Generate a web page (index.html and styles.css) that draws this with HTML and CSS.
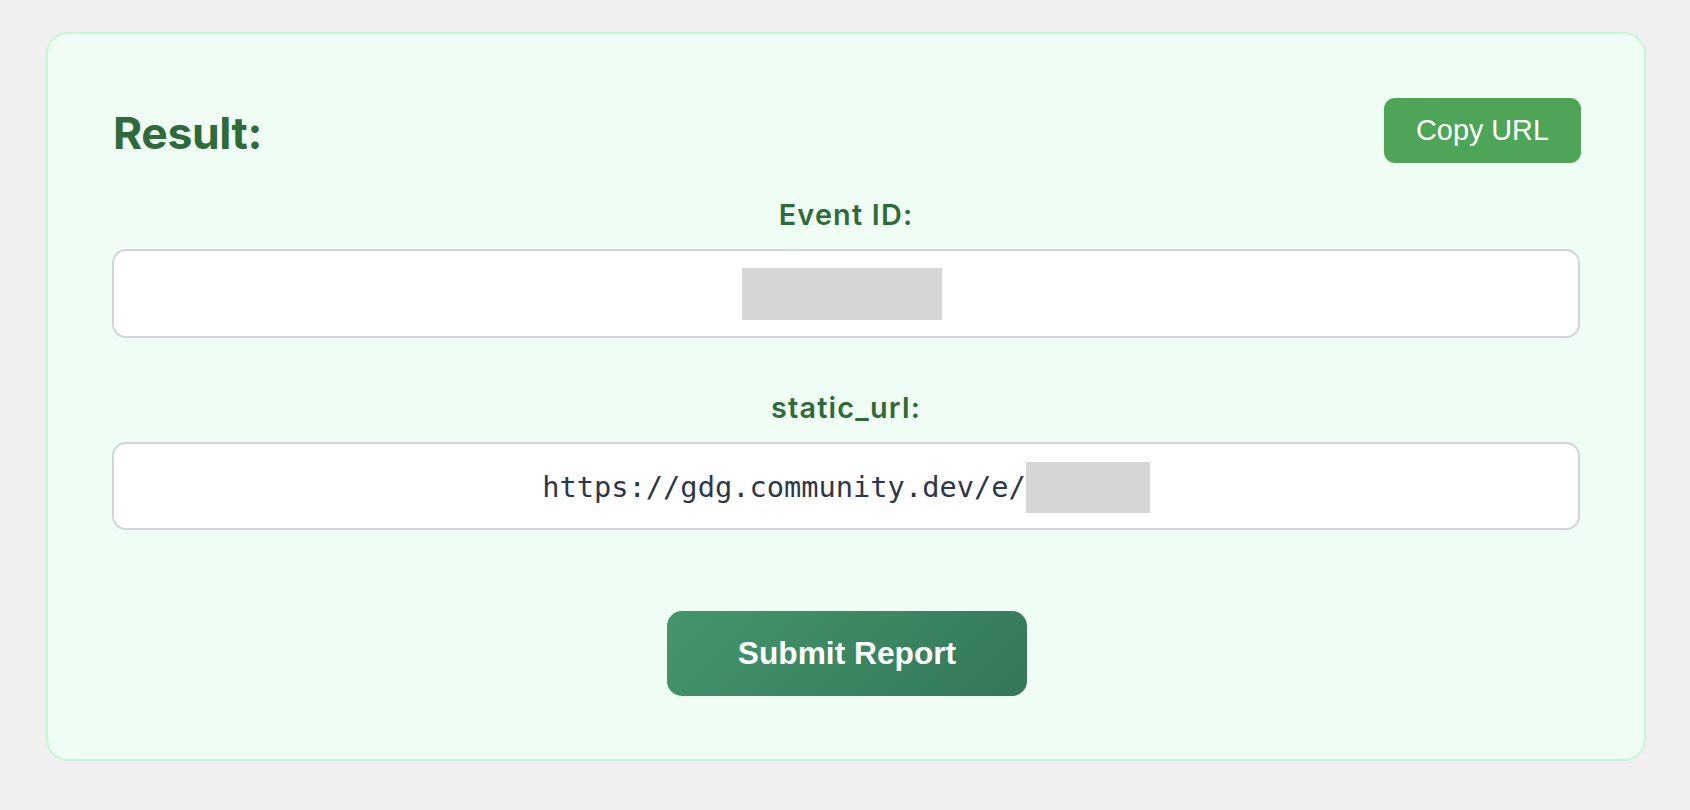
FILE: index.html
```html
<!DOCTYPE html>
<html lang="en">
<head>
<meta charset="utf-8">
<title>Result</title>
<link rel="stylesheet" href="styles.css">
</head>
<body>
  <main class="page">
    <section class="card">
      <div class="card-header">
        <h2 class="title">Result:</h2>
        <button class="copy-btn" type="button">Copy URL</button>
      </div>

      <label class="field-label field-label--first">Event ID:</label>
      <div class="field field--id">
        <span class="redacted redacted--id"></span>
      </div>

      <label class="field-label field-label--second">static_url:</label>
      <div class="field field--url">
        <span class="mono">https://gdg.community.dev/e/</span><span class="redacted redacted--url"></span>
      </div>

      <div class="actions">
        <button class="submit-btn" type="button">Submit Report</button>
      </div>
    </section>
  </main>
</body>
</html>
```

FILE: styles.css
```css
* {
  box-sizing: border-box;
}

html, body {
  margin: 0;
  padding: 0;
}

body {
  background: #f0f0f0;
  font-family: "Inter", "Noto Sans", sans-serif;
}

.page {
  padding: 32px 44px 0 46px;
}

.card {
  width: 1600px;
  background: #f0fdf4;
  border: 2px solid #c6f6d5;
  border-radius: 22px;
  padding: 64px 64px 63px 64px;
  display: flex;
  flex-direction: column;
}

.card-header {
  display: flex;
  justify-content: space-between;
  align-items: center;
  height: 65px;
}

.title {
  margin: 4px 0 0 1px;
  font-family: "Inter", sans-serif;
  font-weight: 700;
  font-size: 44.5px;
  letter-spacing: -0.4px;
  line-height: 56px;
  color: #2f6a3b;
}

.copy-btn {
  height: 65px;
  width: 197px;
  border: none;
  border-radius: 11px;
  background: #4ea457;
  color: #ffffff;
  font-family: "Liberation Sans", Arial, sans-serif;
  font-size: 28.8px;
  padding: 0;
  margin-right: -1px;
}

.field-label {
  display: block;
  text-align: center;
  font-family: "Inter", sans-serif;
  font-weight: 600;
  font-size: 28.8px;
  letter-spacing: 1.2px;
  line-height: 35px;
  height: 35px;
  color: #2f6a3b;
}

.field-label--first {
  margin-top: 34px;
}

.field-label--second {
  margin-top: 52px;
}

.field {
  display: flex;
  justify-content: center;
  align-items: center;
  background: #ffffff;
  border: 2px solid #d1d5db;
  border-radius: 14px;
}

.field--id {
  margin-top: 17px;
  height: 89px;
}

.field--url {
  margin-top: 17px;
  height: 88px;
  padding-top: 2px;
}

.redacted {
  display: inline-block;
  background: #d6d6d6;
}

.redacted--id {
  width: 200px;
  height: 52px;
  margin-right: 8px;
}

.redacted--url {
  width: 124px;
  height: 51px;
}

.mono {
  font-family: "DejaVu Sans Mono", "Liberation Mono", monospace;
  font-size: 28.7px;
  color: #2d3748;
}

.actions {
  display: flex;
  justify-content: center;
  margin-top: 81px;
}

.submit-btn {
  width: 360px;
  height: 85px;
  border: none;
  border-radius: 15px;
  background: linear-gradient(135deg, #44966c 0%, #347758 100%);
  color: #ffffff;
  font-family: "Liberation Sans", Arial, sans-serif;
  font-weight: 700;
  font-size: 31.7px;
  padding: 0;
  margin-left: 2px;
}
```
